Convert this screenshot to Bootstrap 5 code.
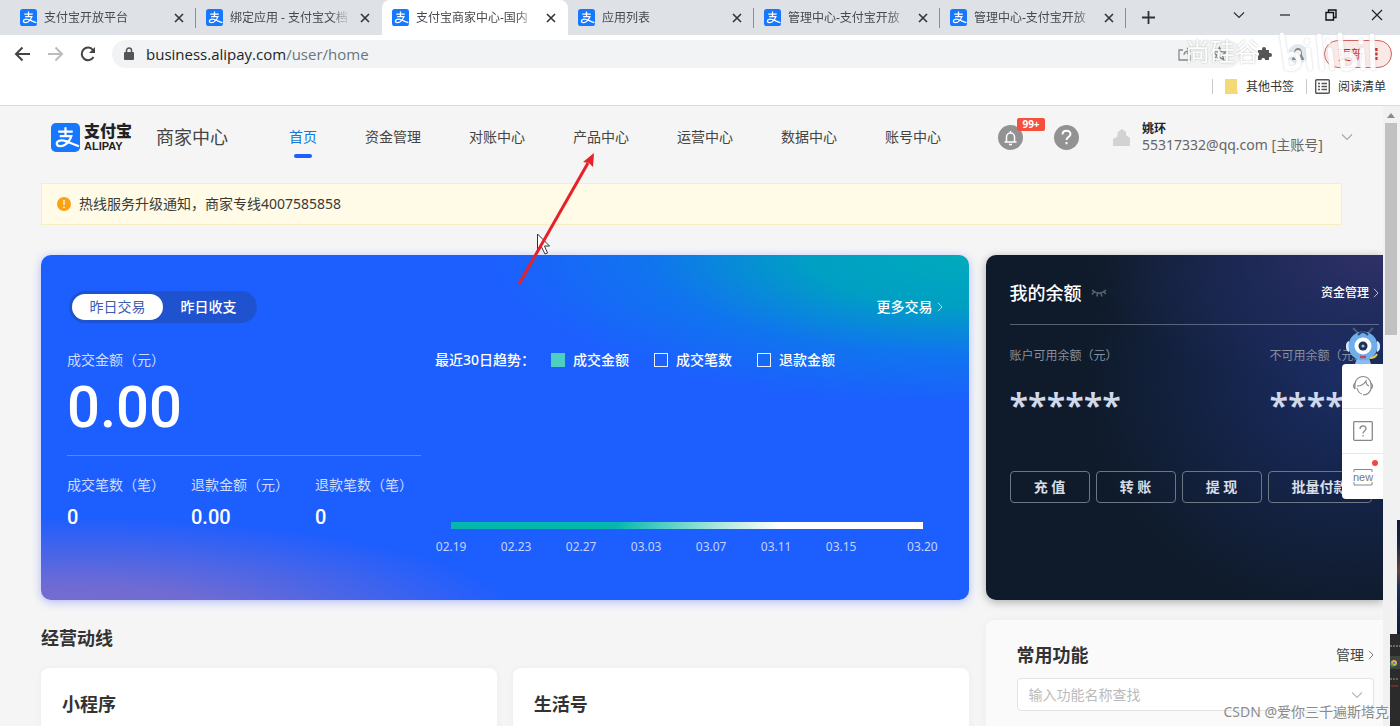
<!DOCTYPE html>
<html lang="zh-CN">
<head>
<meta charset="utf-8">
<meta name="viewport" content="width=device-width, initial-scale=1">
<title>支付宝商家中心</title>
<link href="https://cdn.jsdelivr.net/npm/bootstrap@5.3.0/dist/css/bootstrap.min.css" rel="stylesheet">
<style>
  body { font-family: "Noto Sans", "Noto Sans CJK SC", sans-serif; font-size: 14px; line-height: 20px; color: #444; background: #f5f5f5; }
  a { color: inherit; text-decoration: none; }
  button { border: 0; background: none; padding: 0; color: inherit; }
  svg { display: block; flex-shrink: 0; }
  .fs-s { font-size: 12px; line-height: 16px; }
  .fs-l { font-size: 18px; line-height: 24px; }

  /* browser frame */
  .tabstrip { height: 35px; background: #dee1e6; padding-left: 10px; }
  .tab { flex: 0 1 186px; min-width: 0; gap: 7px; padding: 0 12px 0 10px; position: relative; font-size: 12px; color: #45494d; }
  .tab.split::after { content: ""; position: absolute; right: 0; top: 8px; height: 20px; width: 1px; background: #8a8d91; }
  .tab.current { background: #fff; border-radius: 8px 8px 0 0; }
  .tab-name { flex: 1 1 0; overflow: hidden; white-space: nowrap; -webkit-mask-image: linear-gradient(90deg, #000 82%, transparent 98%); }
  .win-btns { gap: 34px; padding-right: 17px; height: 30px; color: #333; }
  .toolbar { height: 37px; padding: 0 8px 0 14px; gap: 16px; background: #fff; }
  .address { height: 28px; border-radius: 14px; background: #f1f3f4; padding: 0 14px 0 12px; font-family: "Open Sans", sans-serif; font-size: 15px; gap: 12px; }
  .update-btn { height: 28px; width: 68px; border: 1px solid #d0605c; border-radius: 14px; background: #fbe9e7; color: #c5221f; font-size: 13px; gap: 10px; }
  .bookmarks { height: 34px; padding: 0 14px 4px 0; background: #fff; border-bottom: 1px solid #dcdcdc; color: #333; }
  .vline { width: 1px; height: 15px; background: #c9c9c9; }
  .video-mark { position: absolute; top: 20px; right: 10px; height: 62px; gap: 14px; color: #fff; font-size: 25px; text-shadow: 0 0 2px #aaa; pointer-events: none; opacity: .9; }

  /* page */
  .topnav { height: 62px; padding: 0 30px 0 51px; }
  .brand { font-size: 16px; line-height: 17px; font-weight: 900; color: #222; }
  .brand-sub { font: 700 11px/12px "Liberation Sans", sans-serif; color: #222; }
  .menu { gap: 48px; margin-left: 61px; }
  .menu a { position: relative; }
  .menu a.on { color: #1677d8; }
  .menu a.on::after { content: ""; position: absolute; left: 5px; right: 5px; bottom: -11px; height: 4px; border-radius: 2px; background: #1f5eff; }
  .round-btn { position: relative; width: 25px; height: 25px; border-radius: 50%; background: #929292; }
  .help { margin: 0 34px 0 31px; }
  .count { position: absolute; left: 19px; top: -7px; width: 28px; height: 13px; border-radius: 2px; background: #f5503c; color: #fff; font-size: 10px; line-height: 13px; font-weight: 700; }
  .user { min-width: 199px; line-height: 16px; color: #666; white-space: nowrap; }
  .notice { margin: 15px 41px 0; height: 42px; border: 1px solid #f6f0bf; background: #fffbe6; padding: 0 15px; gap: 8px; color: #3b3a33; }
  .board { display: grid; grid-template-columns: minmax(0, 7fr) minmax(0, 3fr); column-gap: 17px; margin: 30px 0 0 41px; }
  .trade { border-radius: 10px; padding: 36px 26px 45px; color: #fff; box-shadow: 0 2px 10px rgba(70, 100, 255, .4);
    background: radial-gradient(ellipse 52% 44% at 100% 0, #00aabb 0, #009fc4 34%, rgba(14,120,236,.85) 66%, rgba(29,94,255,0) 100%), radial-gradient(ellipse 48% 30% at 4% 106%, #7d6dcc 0, #6f6bd3 35%, rgba(29,94,255,0) 100%), #1d5eff; }
  .switcher { background: #1f52cf; border-radius: 16px; padding: 3px; margin-left: 2px; }
  .switcher button { height: 26px; width: 91px; border-radius: 13px; font-weight: 500; }
  .switcher .on { background: #fff; color: #3d5db5; font-weight: 400; }
  .sum-col { flex: 0 0 42%; }
  .soft { color: #cfdcff; }
  .big-num { font: 500 58px/60px Roboto, sans-serif; margin-top: 7px; }
  .rule { height: 1px; background: rgba(255,255,255,.25); margin: 18px 18px 19px 0; }
  .stats { display: grid; grid-template-columns: repeat(3, 124px); }
  .stats b { display: block; font: 500 20px/24px Roboto, sans-serif; margin-top: 10px; }
  .trend-col { margin-left: -4px; }
  .legend-row { gap: 25px; font-weight: 500; white-space: nowrap; }
  .legend-row label { gap: 8px; }
  .legend-row input { appearance: none; width: 14px; height: 14px; border: 1px solid #e8efff; margin: 0; }
  .legend-row input:checked { background: #4dd0c2; border-color: #4dd0c2; }
  .trend { margin: 152px 12px 0 8px; }
  .trend-line { height: 7px; margin: 0 8px 10px; background: linear-gradient(90deg, #06b8ab 0 35%, #b5e9e0 58%, #fff 70%); }
  .days { display: grid; grid-template-columns: repeat(30, minmax(0, 1fr)); color: #c4d4ff; }

  .balance { border-radius: 10px 0 0 10px; padding: 26px 4px 0 24px; color: #fff; overflow: hidden; box-shadow: 0 2px 10px rgba(0,0,0,.3);
    background: radial-gradient(ellipse 75% 40% at 100% 0, rgba(54,52,112,.8), rgba(36,46,100,.5) 50%, transparent), radial-gradient(ellipse 65% 70% at 90% 35%, #1b2d64, #15244a 45%, transparent), #0f1b2a; }
  .balance .rule { margin: 19px 0 23px; background: rgba(255,255,255,.3); }
  .accounts { display: grid; grid-template-columns: 260px auto; white-space: nowrap; color: #868f9f; }
  .masked { font: 600 34px/40px "Noto Sans", sans-serif; margin-top: 21px; color: #cfd9ea; }
  .ops { gap: 6px; margin-top: 46px; }
  .ops button { flex: 0 0 80px; height: 32px; border: 1px solid #6d7683; border-radius: 4px; font-weight: 700; color: #d8dde6; }
  .ops button:last-child { flex-basis: 104px; }

  .sec-title { font-weight: 700; color: #333; }
  .tile { flex: 1 1 0; background: #fff; border-radius: 8px; padding: 24px 21px; height: 120px; box-shadow: 0 0 8px rgba(0,0,0,.04); }
  .common { margin-top: 20px; padding: 23px 9px 24px 31px; background: #fafafa; box-shadow: 0 0 10px rgba(0,0,0,.04); border-radius: 8px 0 0 0; }
  .finder { height: 33px; border: 1px solid #e3e3e3; border-radius: 4px; background: #fff; padding: 0 10px 0 11px; margin-top: 11px; }
  .finder input { border: 0; outline: 0; padding: 0; min-width: 0; }
  .finder input::placeholder { color: #bbb; }

  .scroller { flex: 0 0 17px; background: #f1f1f1; padding: 7px 3px 0 2px; }
  .thumb { height: 212px; background: #c1c1c1; margin-top: 5px; }
  .dock { position: absolute; right: 17px; top: 220px; width: 41px; }
  .dock-list { background: #fff; border-radius: 4px 0 0 4px; }
  .dock-list button { height: 45px; width: 41px; position: relative; border-bottom: 1px solid #e8e8e8; display: flex; align-items: center; justify-content: center; }
  .dock-list button:last-child { border: 0; }
  .red-dot { position: absolute; right: 5px; top: 6px; width: 6px; height: 6px; border-radius: 50%; background: #f04a3e; }
  .behind { position: absolute; right: 0; bottom: 0; width: 10px; height: 92px; background: #2b2b2b; }
  .behind-top { position: absolute; right: 0; bottom: 92px; width: 3px; height: 114px; background: linear-gradient(#151c2e, #1b2540 20%, #63433f 45%, #1a2d55 60%, #101b38); }
  .annot { position: absolute; left: 510px; top: 145px; pointer-events: none; }
  .credit { position: absolute; right: 11px; bottom: 4px; color: #8b8b8b; text-shadow: 0 0 2px #fff; white-space: nowrap; }
</style>
</head>
<body class="vh-100 d-flex flex-column overflow-hidden position-relative">
<svg width="0" height="0" class="position-absolute">
  <symbol id="ali" viewBox="0 0 30 30"><rect width="30" height="30" rx="5" fill="#1677ff"/><path d="M7.500 9h15M15 4.500v9M9 13.500h12c-1.300 4-3.500 7-6.500 9-3.500 2-8 2-8.500-.8-.3-3.500 5-4.700 10-2.700 4.500 1.800 8 3.500 13 5" fill="none" stroke="#fff" stroke-width="2.300"/></symbol>
  <symbol id="x" viewBox="0 0 10 10"><path d="M1 1l8 8M9 1L1 9" stroke="#333" stroke-width="1.600"/></symbol>
  <symbol id="right" viewBox="0 0 6 10"><path d="M1 .8L5 5 1 9.200" fill="none" stroke="currentColor" opacity=".7"/></symbol>
  <symbol id="down" viewBox="0 0 12 8"><path d="M1 1.500l5 5 5-5" fill="none" stroke="currentColor" stroke-width="1.200"/></symbol>
</svg>

<header class="flex-shrink-0">
  <div class="tabstrip d-flex">
    <div class="tab split d-flex align-items-center"><svg width="17" height="17"><use href="#ali"/></svg><span class="tab-name">支付宝开放平台</span><button aria-label="关闭"><svg width="10" height="10"><use href="#x"/></svg></button></div>
    <div class="tab d-flex align-items-center"><svg width="17" height="17"><use href="#ali"/></svg><span class="tab-name">绑定应用 - 支付宝文档</span><button aria-label="关闭"><svg width="10" height="10"><use href="#x"/></svg></button></div>
    <div class="tab current d-flex align-items-center"><svg width="17" height="17"><use href="#ali"/></svg><span class="tab-name">支付宝商家中心-国内</span><button aria-label="关闭"><svg width="10" height="10"><use href="#x"/></svg></button></div>
    <div class="tab split d-flex align-items-center"><svg width="17" height="17"><use href="#ali"/></svg><span class="tab-name">应用列表</span><button aria-label="关闭"><svg width="10" height="10"><use href="#x"/></svg></button></div>
    <div class="tab split d-flex align-items-center"><svg width="17" height="17"><use href="#ali"/></svg><span class="tab-name">管理中心-支付宝开放</span><button aria-label="关闭"><svg width="10" height="10"><use href="#x"/></svg></button></div>
    <div class="tab split d-flex align-items-center"><svg width="17" height="17"><use href="#ali"/></svg><span class="tab-name">管理中心-支付宝开放</span><button aria-label="关闭"><svg width="10" height="10"><use href="#x"/></svg></button></div>
    <button class="ms-3" aria-label="新标签页"><svg width="13" height="13" viewBox="0 0 13 13"><path d="M6.500 0v13M0 6.500h13" stroke="#333" stroke-width="1.800"/></svg></button>
    <div class="win-btns d-flex align-items-center ms-auto">
      <button aria-label="搜索标签页"><svg width="12" height="8"><use href="#down"/></svg></button>
      <button aria-label="最小化"><svg width="12" height="12" viewBox="0 0 12 12"><path d="M1 6h10" stroke="#222" stroke-width="1.200"/></svg></button>
      <button aria-label="还原"><svg width="12" height="12" viewBox="0 0 12 12"><path d="M1 3.500h7.500V11H1zM3.500 3.500V1H11v7.500H8.500" fill="none" stroke="#111" stroke-width="1.400"/></svg></button>
      <button aria-label="关闭窗口"><svg width="12" height="12" viewBox="0 0 12 12"><path d="M1 1l10 10M11 1L1 11" stroke="#222" stroke-width="1.200"/></svg></button>
    </div>
  </div>
  <div class="toolbar d-flex align-items-center">
    <button aria-label="后退"><svg width="17" height="16" viewBox="0 0 17 16"><path d="M16 8H2M8.500 1.500L2 8l6.500 6.500" fill="none" stroke="#444" stroke-width="2"/></svg></button>
    <button aria-label="前进"><svg width="17" height="16" viewBox="0 0 17 16"><path d="M1 8h14M8.500 1.500L15 8l-6.500 6.500" fill="none" stroke="#bbb" stroke-width="2"/></svg></button>
    <button aria-label="刷新"><svg width="16" height="16" viewBox="0 0 16 16"><path d="M13.500 11A6.300 6.300 0 1 1 13 4" fill="none" stroke="#444" stroke-width="2"/><path d="M15 1v6H9z" fill="#444"/></svg></button>
    <div class="address d-flex align-items-center flex-grow-1">
      <svg width="10" height="14" viewBox="0 0 10 14"><rect y="5" width="10" height="8" rx="1" fill="#555"/><path d="M2.500 6V3.500a2.500 2.500 0 0 1 5 0V6" fill="none" stroke="#555" stroke-width="1.500"/></svg>
      <span class="flex-grow-1"><span class="text-dark">business.alipay.com</span><span class="text-secondary">/user/home</span></span>
      <svg width="14" height="14" viewBox="0 0 14 14"><path d="M5 3H1v10h11V8M6 8c0-3 2-4 6-4M9 1l3 3-3 3" fill="none" stroke="#888" stroke-width="1.300"/></svg>
      <svg class="ms-2" width="15" height="15" viewBox="0 0 16 16"><path d="M8 1.500l2 4.500 5 .5-3.800 3.200 1.200 4.800L8 12l-4.400 2.500 1.200-4.800L1 6.500 6 6z" fill="none" stroke="#777" stroke-width="1.400"/></svg>
    </div>
    <button aria-label="扩展程序"><svg width="15" height="15" viewBox="0 0 15 15"><path d="M1 4h4V3a2 2 0 0 1 4 0v1h3v3h1a2 2 0 0 1 0 4h-1v3H8v-1a2 2 0 0 0-3.500 0v1H1v-4a2 2 0 0 0 0-3.500z" fill="#555"/></svg></button>
    <button aria-label="用户"><svg width="20" height="20" viewBox="0 0 20 20"><circle cx="10" cy="10" r="10" fill="#e2e6ee"/><path d="M4 16c0-3 2-3 2-6s1-6 4-6 4 3 4 6 2 3 2 6h-4v-4H8v4z" fill="#7b808b"/><circle cx="10" cy="9" r="3" fill="#f6f2ef"/></svg></button>
    <button class="update-btn d-flex align-items-center justify-content-center">更新<svg width="4" height="14" viewBox="0 0 4 14"><path d="M.5 1h3v3h-3zM.5 5.500h3v3h-3zM.5 10h3v3h-3z" fill="#c5221f"/></svg></button>
  </div>
  <div class="bookmarks fs-s d-flex align-items-center justify-content-end">
    <i class="vline me-2"></i><a href="#" class="d-flex align-items-center ms-1 me-2"><svg class="me-2" width="13" height="15" viewBox="0 0 13 15"><path d="M0 0h12v10l1 5H0z" fill="#f6d977"/></svg>其他书签</a>
    <i class="vline mx-1"></i><a href="#" class="d-flex align-items-center ms-1"><svg class="me-2" width="15" height="15" viewBox="0 0 15 15"><rect x=".7" y=".7" width="13.600" height="13.600" rx="1" fill="none" stroke="#555" stroke-width="1.400"/><path d="M3 4.500h2M3 7.500h2M3 10.500h2M6.500 4.500H12M6.500 7.500H12M6.500 10.500H12" stroke="#555" stroke-width="1.300"/></svg>阅读清单</a>
  </div>
</header>
<div class="video-mark d-flex align-items-center"><span>尚硅谷</span>
  <svg width="116" height="50" viewBox="0 0 116 50" fill="none" stroke="#fff" stroke-width="5" stroke-linecap="round" style="filter:drop-shadow(0 0 1px #ccc)"><path d="M8 9l5 33c10 2 14-4 11-10-2-4-7-5-11-2M34 24l2 18M33 15v1M45 10l3 32M56 24l2 18M54 15v1M66 9l3 33c10 2 14-4 11-10-2-4-7-5-11-2M88 24l1 18M87 15v1M98 10l1 32"/></svg>
</div>

<div class="d-flex flex-grow-1 position-relative overflow-hidden">
  <main class="flex-grow-1 overflow-hidden">
    <div class="topnav d-flex align-items-center">
      <svg width="29" height="29"><use href="#ali"/></svg>
      <div class="ms-1"><div class="brand">支付宝</div><div class="brand-sub">ALIPAY</div></div>
      <span class="fs-l ms-4">商家中心</span>
      <nav class="menu d-flex text-nowrap">
        <a href="#" class="on">首页</a><a href="#">资金管理</a><a href="#">对账中心</a><a href="#">产品中心</a><a href="#">运营中心</a><a href="#">数据中心</a><a href="#">账号中心</a>
      </nav>
      <div class="d-flex align-items-center ms-auto">
        <button class="round-btn d-flex align-items-center justify-content-center" aria-label="消息"><svg width="15" height="17" viewBox="0 0 15 17"><path d="M1.500 13h12M3.500 13V8a4 4 0 0 1 8 0v5M7.500 2v2M6 15.500h3" fill="none" stroke="#fff" stroke-width="1.500"/></svg><span class="count">99+</span></button>
        <button class="round-btn help d-flex align-items-center justify-content-center" aria-label="帮助"><svg width="13" height="17" viewBox="0 0 13 17"><path d="M2.500 5.500c0-5 8-5 8-.5 0 3-4 3-4 6M6.500 13v2.200" fill="none" stroke="#fff" stroke-width="1.900"/></svg></button>
        <svg width="17" height="17" viewBox="0 0 17 17"><path d="M0 10l4-2 1-5 4-3 4 3v3l4 3v8H0z" fill="#d2d2d2"/></svg>
        <div class="user ms-2 ps-1"><div class="fs-s fw-bold text-dark">姚环</div><div>55317332@qq.com [主账号]</div></div>
        <button class="ms-1" aria-label="展开" style="color:#aaa"><svg width="12" height="8"><use href="#down"/></svg></button>
      </div>
    </div>

    <div class="notice d-flex align-items-center">
      <svg width="14" height="14" viewBox="0 0 14 14"><circle cx="7" cy="7" r="7" fill="#faa114"/><path d="M7 3v5M7 9.500V11" stroke="#fff" stroke-width="1.300"/></svg>
      <span>热线服务升级通知，商家专线4007585858</span>
    </div>

    <div class="board">
      <section class="trade">
        <div class="d-flex align-items-center justify-content-between">
          <div class="switcher d-flex"><button class="on">昨日交易</button><button>昨日收支</button></div>
          <a href="#" class="d-flex align-items-center fw-medium">更多交易<svg class="ms-1" width="6" height="10"><use href="#right"/></svg></a>
        </div>
        <div class="d-flex" style="margin-top:27px">
          <div class="sum-col">
            <div class="soft">成交金额（元）</div>
            <div class="big-num">0.00</div>
            <div class="rule"></div>
            <div class="stats">
              <div><span class="soft">成交笔数（笔）</span><b>0</b></div>
              <div><span class="soft">退款金额（元）</span><b>0.00</b></div>
              <div><span class="soft">退款笔数（笔）</span><b>0</b></div>
            </div>
          </div>
          <div class="trend-col flex-grow-1">
            <div class="d-flex">
              <span class="fw-medium text-nowrap me-3">最近30日趋势：</span>
              <div class="legend-row d-flex align-items-center">
                <label class="d-flex align-items-center"><input type="checkbox" checked>成交金额</label>
                <label class="d-flex align-items-center"><input type="checkbox">成交笔数</label>
                <label class="d-flex align-items-center"><input type="checkbox">退款金额</label>
              </div>
            </div>
            <div class="trend">
              <div class="trend-line"></div>
              <div class="days fs-s">
                <span class="d-flex justify-content-center" style="grid-column:1">02.19</span>
                <span class="d-flex justify-content-center" style="grid-column:5">02.23</span>
                <span class="d-flex justify-content-center" style="grid-column:9">02.27</span>
                <span class="d-flex justify-content-center" style="grid-column:13">03.03</span>
                <span class="d-flex justify-content-center" style="grid-column:17">03.07</span>
                <span class="d-flex justify-content-center" style="grid-column:21">03.11</span>
                <span class="d-flex justify-content-center" style="grid-column:25">03.15</span>
                <span class="d-flex justify-content-center" style="grid-column:30">03.20</span>
              </div>
            </div>
          </div>
        </div>
      </section>

      <section class="balance">
        <div class="d-flex align-items-center">
          <span class="fs-l fw-medium">我的余额</span>
          <svg class="ms-2" width="18" height="10" viewBox="0 0 18 10"><path d="M2 2c4 4 10 4 14 0M4 4L2 6.500M7.500 5.500L7 8.500M11 5.500l1 3M14 4l2 2" fill="none" stroke="#566075" stroke-width="1.600"/></svg>
          <a href="#" class="fs-s fw-medium d-flex align-items-center ms-auto">资金管理<svg class="ms-1" width="6" height="10"><use href="#right"/></svg></a>
        </div>
        <div class="rule"></div>
        <div class="accounts">
          <div><div class="fs-s">账户可用余额（元）</div><div class="masked">******</div></div>
          <div><div class="fs-s">不可用余额（元）</div><div class="masked">******</div></div>
        </div>
        <div class="ops d-flex text-nowrap"><button>充 值</button><button>转 账</button><button>提 现</button><button>批量付款</button></div>
      </section>

      <section style="margin-top:26px">
        <h2 class="sec-title fs-l mb-0">经营动线</h2>
        <div class="d-flex gap-3" style="margin-top:18px">
          <div class="tile"><h3 class="sec-title fs-l mb-0">小程序</h3></div>
          <div class="tile"><h3 class="sec-title fs-l mb-0">生活号</h3></div>
        </div>
      </section>

      <section class="common">
        <div class="d-flex align-items-center justify-content-between">
          <h2 class="sec-title fs-l mb-0">常用功能</h2>
          <a href="#" class="d-flex align-items-center">管理<svg class="ms-1" width="6" height="10"><use href="#right"/></svg></a>
        </div>
        <div class="finder d-flex align-items-center"><input class="flex-grow-1" type="text" placeholder="输入功能名称查找" aria-label="输入功能名称查找"><svg width="12" height="8" style="color:#bbb"><use href="#down"/></svg></div>
      </section>
    </div>
  </main>

  <div class="scroller"><svg width="12" height="5" viewBox="0 0 12 5"><path d="M2 5l4-5 4 5z" fill="#8a8a8a"/></svg><div class="thumb"></div></div>

  <aside class="dock">
    <svg class="ms-1" width="34" height="38" viewBox="0 0 34 38"><path d="M12 7L7 2M22 7l5-5" stroke="#4e5a72" stroke-width="2"/><path d="M0 20q0-4 3-5v11q-3-1-3-5zM34 20q0-4-3-5v11q3-1 3-5z" fill="#dceaff"/><path d="M9 38l3-9h10l3 9z" fill="#8bbcf0"/><circle cx="17" cy="20" r="14.500" fill="#6faeea"/><path d="M12 9q5-6 10 0" fill="none" stroke="#274a78" stroke-width="2"/><circle cx="17" cy="20" r="8.500" fill="#fff"/><circle cx="17" cy="20" r="4.500" fill="#1d3154"/><circle cx="17" cy="20" r="1.600" fill="#9db9e4"/><path d="M14 31h6" stroke="#c34467" stroke-width="2.500"/><path d="M24 32q5 0 7-4" fill="none" stroke="#e5cc4a" stroke-width="2"/></svg>
    <div class="dock-list">
      <button aria-label="客服"><svg width="22" height="22" viewBox="0 0 22 22" fill="none" stroke="#888" stroke-width="1.100"><path d="M3 14V9c1-10 15-10 16 0v5q-2 6-8 6M3 8q-3 3 0 6M19 8q3 3 0 6M5 11q6 0 9-5 0 4 3 5M5 13q1 5 5 6"/></svg></button>
      <button aria-label="帮助"><svg width="20" height="20" viewBox="0 0 20 20" fill="none" stroke="#888" stroke-width="1.300"><rect x=".7" y=".7" width="18.600" height="18.600" rx="1"/><path d="M7 8c0-4 6-4 6-.5 0 2.500-3 2.500-3 5M10 14v1.500"/></svg></button>
      <button aria-label="新功能"><svg width="22" height="18" viewBox="0 0 22 18"><path d="M2 4V1.500h18V4M2 14v3h18v-3" fill="none" stroke="#888"/><text x="11" y="12.500" text-anchor="middle" font-family="Liberation Sans" font-size="11" fill="#777">new</text></svg><i class="red-dot"></i></button>
    </div>
  </aside>
  <div class="behind-top"></div>
  <div class="behind"><svg width="10" height="92" viewBox="0 0 10 92"><path d="M0 12h10" stroke="#aaa" stroke-dasharray="2 1"/><path d="M0 22h10v13H0z" fill="#414345"/><circle cx="4" cy="29" r="3" fill="#e6b53e"/><path d="M1 29a3 3 0 0 0 3 3" stroke="#3b9b50" stroke-width="2" fill="none"/><circle cx="4" cy="29" r="1.300" fill="#4285f4"/><path d="M0 45h8" stroke="#a39f78" stroke-dasharray="2 1"/><path d="M1 52h7" stroke="#a33"/></svg></div>
</div>

<svg class="annot" width="95" height="150" viewBox="0 0 95 150"><path d="M27.500 89v17l4-4 3.500 7 2.500-1-3-7h5z" fill="#fff" stroke="#333"/><path d="M9 139L78 18" stroke="#e8202a" stroke-width="3"/><path d="M84 8l-1 14-4-4-6-1z" fill="#e8202a"/></svg>
<div class="credit">CSDN @爱你三千遍斯塔克</div>
<script src="https://cdn.jsdelivr.net/npm/bootstrap@5.3.0/dist/js/bootstrap.bundle.min.js"></script>
</body>
</html>
